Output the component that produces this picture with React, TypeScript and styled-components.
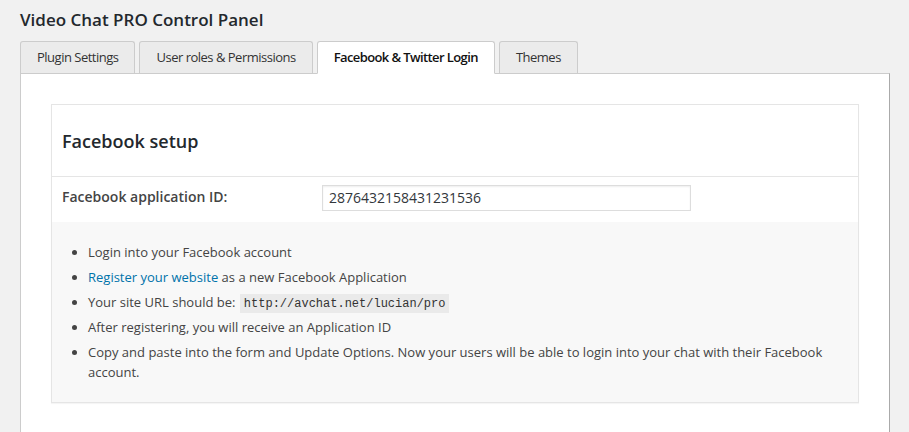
import React from "react";
import styled, { createGlobalStyle } from "styled-components";

const GlobalStyle = createGlobalStyle`
  html, body {
    margin: 0;
    padding: 0;
    background: #f1f1f1;
    overflow: hidden;
  }
  body {
    font-family: "Open Sans", "Noto Sans", sans-serif;
    color: #444;
    font-size: 13px;
  }
`;

const tabs = [
  { label: "Plugin Settings", active: false },
  { label: "User roles & Permissions", active: false },
  { label: "Facebook & Twitter Login", active: true },
  { label: "Themes", active: false },
];

const App: React.FC = () => {
  const steps: React.ReactNode[] = [
    "Login into your Facebook account",
    <>
      <Link href="#">Register your website</Link> as a new Facebook Application
    </>,
    <>
      Your site URL should be: <Code>http://avchat.net/lucian/pro</Code>
    </>,
    "After registering, you will receive an Application ID",
    "Copy and paste into the form and Update Options. Now your users will be able to login into your chat with their Facebook account.",
  ];

  return (
    <>
      <GlobalStyle />
      <Wrap>
        <Title>Video Chat PRO Control Panel</Title>
        <TabBar>
          {tabs.map((t) => (
            <Tab key={t.label} $active={t.active}>
              {t.label}
            </Tab>
          ))}
        </TabBar>
        <Panel>
          <Box>
            <BoxHeader>
              <BoxTitle>Facebook setup</BoxTitle>
            </BoxHeader>
            <FormRow>
              <Label>Facebook application ID:</Label>
              <Input defaultValue="2876432158431231536" />
            </FormRow>
            <Help>
              <Steps>
                {steps.map((s, i) => (
                  <Step key={i}>{s}</Step>
                ))}
              </Steps>
            </Help>
          </Box>
        </Panel>
      </Wrap>
    </>
  );
};

export default App;

const Wrap = styled.div`
  padding: 9px 19px 0 20px;
`;

const Title = styled.h2`
  margin: 0;
  height: 32px;
  line-height: 22px;
  font-size: 17px;
  font-weight: 600;
  color: #23282d;
`;

const TabBar = styled.div`
  display: flex;
  gap: 4px;
  height: 32px;
  position: relative;
  z-index: 1;
`;

const Tab = styled.div<{ $active: boolean }>`
  box-sizing: border-box;
  height: ${(p) => (p.$active ? "33px" : "32px")};
  padding: 0 16px 1px;
  display: flex;
  align-items: center;
  border: 1px solid #ccc;
  border-bottom: ${(p) => (p.$active ? "1px solid #fff" : "none")};
  border-radius: 3px 3px 0 0;
  background: ${(p) => (p.$active ? "#fff" : "#ebebeb")};
  color: ${(p) => (p.$active ? "#111" : "#333")};
  font-size: 13px;
  letter-spacing: ${(p) => (p.$active ? "-0.6px" : "-0.5px")};
  font-weight: ${(p) => (p.$active ? 600 : 400)};
  white-space: nowrap;
`;

const Panel = styled.div`
  background: #fff;
  border: 1px solid #ccc;
  border-right-color: #aaa;
  padding: 30px 30px 40px 30px;
  min-height: 400px;
`;

const Box = styled.div`
  border: 1px solid #e5e5e5;
  box-shadow: 0 1px 1px rgba(0, 0, 0, 0.04);
`;

const BoxHeader = styled.div`
  height: 71px;
  display: flex;
  align-items: center;
  padding: 0 10px;
  border-bottom: 1px solid #e5e5e5;
`;

const BoxTitle = styled.h3`
  margin: 0;
  font-size: 18px;
  font-weight: 600;
  color: #23282d;
`;

const FormRow = styled.div`
  display: grid;
  grid-template-columns: 260px 369px;
  align-items: center;
  height: 45px;
  padding: 0 10px;
`;

const Label = styled.label`
  font-size: 14px;
  font-weight: 600;
  color: #444;
  margin-top: -6px;
`;

const Input = styled.input`
  box-sizing: border-box;
  width: 369px;
  height: 26px;
  margin-top: -4px;
  padding: 0 6px;
  border: 1px solid #ddd;
  box-shadow: inset 0 1px 2px rgba(0, 0, 0, 0.07);
  font-family: "Open Sans", sans-serif;
  font-size: 14px;
  color: #32373c;
  background: #fff;
  outline: none;
`;

const Help = styled.div`
  background: #f8f8f8;
  padding: 20px 10px 20px 10px;
`;

const Steps = styled.ul`
  margin: 0;
  padding-left: 26px;
  list-style: disc;
`;

const Step = styled.li`
  font-size: 13px;
  line-height: 20px;
  margin-bottom: 5px;
  color: #444;
  &:last-child {
    margin-bottom: 0;
  }
`;

const Link = styled.a`
  color: #0073aa;
  text-decoration: none;
`;

const Code = styled.code`
  font-family: "Liberation Mono", monospace;
  font-size: 12px;
  line-height: 12px;
  background: #eaeaea;
  padding: 3px 4px 2px;
  margin: 0 1px;
  color: #333;
`;
